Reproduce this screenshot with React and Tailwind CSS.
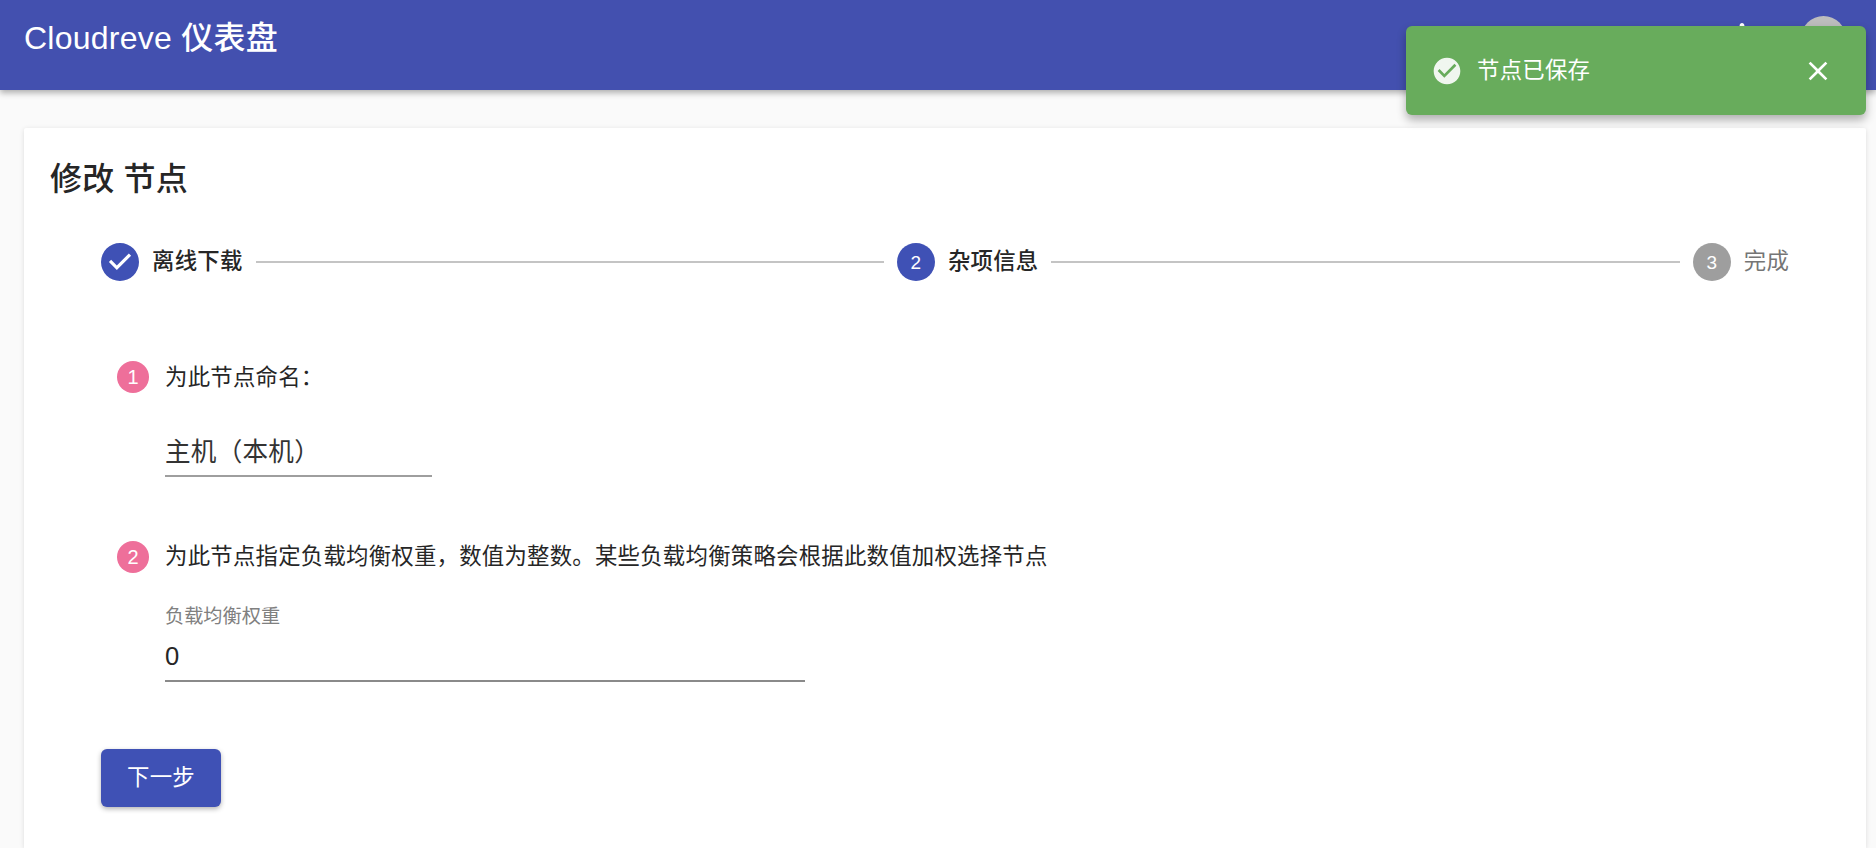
const FONT = "font-['Liberation_Sans','Noto_Sans_CJK_SC',sans-serif]";

function StepDone() {
  return (
    <svg viewBox="0 0 24 24" className="w-[38px] h-[38px] shrink-0 text-[#3f51b5]" fill="currentColor">
      <path d="M12 0a12 12 0 1 0 0 24 12 12 0 0 0 0-24zm-2 17l-5-5 1.4-1.4 3.6 3.6 7.6-7.6L19 8l-9 9z" />
    </svg>
  );
}

function StepNum({ n, color }) {
  return (
    <div className={`w-[38px] h-[38px] shrink-0 rounded-full flex items-center justify-center text-white text-[19px] leading-none ${color}`}>
      {n}
    </div>
  );
}

function Line() {
  return <div className="flex-1 h-[2px] bg-[#c4c4c4]" />;
}

function Bullet({ n }) {
  return (
    <div className="w-[32px] h-[32px] shrink-0 rounded-full bg-[#ee6f9a] flex items-center justify-center text-white text-[20px] leading-none">
      {n}
    </div>
  );
}

export default function App() {
  return (
    <div className={`relative h-screen overflow-hidden bg-[#fafafa] text-[#262626] flex flex-col ${FONT}`}>
      <header className="h-[90px] shrink-0 bg-[#4350af] text-white flex items-center justify-between pl-[24px] pr-[30px] pb-[14px] shadow-[0_3px_6px_rgba(0,0,0,0.3)] relative z-10">
        <div className="text-[32px] leading-[48px] tracking-[0.24px] font-medium">Cloudreve 仪表盘</div>
        <div className="flex items-center gap-[40px]">
          <svg viewBox="0 0 24 24" className="w-[38px] h-[38px] text-white" fill="currentColor">
            <path d="M12 22c1.1 0 2-.9 2-2h-4c0 1.1.89 2 2 2zm6-6v-5c0-3.07-1.64-5.64-4.5-6.32V4c0-.83-.67-1.5-1.5-1.5s-1.5.67-1.5 1.5v.68C7.63 5.36 6 7.92 6 11v5l-2 2v1h16v-1l-2-2z" />
          </svg>
          <div className="w-[45px] h-[45px] rounded-full bg-[#bdbdbd]" />
        </div>
      </header>

      <main className="flex-1 min-h-0 pt-[38px] pl-[24px] pr-[10px] flex flex-col">
        <div className="flex-1 bg-white rounded-t-[2px] shadow-[0_1px_5px_rgba(0,0,0,0.12)] pt-[26px] px-[26px]">
          <h1 className="text-[32px] leading-[51px] tracking-[0.24px] font-medium">修改 节点</h1>

          <div className="mt-[38px] ml-[51px] mr-[51px] flex items-center gap-[13px]">
            <StepDone />
            <span className="text-[22.4px] leading-[38px] tracking-[0.24px] font-medium">离线下载</span>
            <Line />
            <StepNum n="2" color="bg-[#3f51b5]" />
            <span className="text-[22.4px] leading-[38px] tracking-[0.24px] font-medium">杂项信息</span>
            <Line />
            <StepNum n="3" color="bg-[#9e9e9e]" />
            <span className="text-[22.4px] leading-[38px] tracking-[0.24px] text-[#757575]">完成</span>
          </div>

          <div className="mt-[80px] ml-[67px] flex items-center gap-[16px]">
            <Bullet n="1" />
            <span className="text-[22.4px] leading-[32px] tracking-[0.24px] relative top-[1px]">为此节点命名：</span>
          </div>
          <div className="mt-[40px] ml-[115px] w-[267px] h-[44px] border-b-2 border-[#9e9e9e] text-[25.6px] leading-[38px] tracking-[0.24px] text-[#333333]">
            主机（本机）
          </div>

          <div className="mt-[64px] ml-[67px] flex items-center gap-[16px]">
            <Bullet n="2" />
            <span className="text-[22.4px] leading-[32px] tracking-[0.24px]">为此节点指定负载均衡权重，数值为整数。某些负载均衡策略会根据此数值加权选择节点</span>
          </div>
          <div className="mt-[30px] ml-[115px] w-[640px]">
            <div className="text-[19.2px] leading-[28px] text-[#808080]">负载均衡权重</div>
            <div className="mt-[7px] h-[44px] border-b-2 border-[#8a8a8a] text-[25.6px] leading-[36px]">0</div>
          </div>

          <button className="mt-[67px] ml-[51px] w-[120px] h-[58px] rounded-[6px] bg-[#3f51b5] text-white text-[22.4px] tracking-[0.24px] shadow-[0_2px_5px_rgba(0,0,0,0.3)]">
            下一步
          </button>
        </div>
      </main>

      <div className="absolute z-20 top-[26px] right-[10px] w-[460px] h-[89px] rounded-[6px] bg-[#68ac5c] text-white flex items-center pl-[25px] pr-[32px] shadow-[0_5px_10px_rgba(0,0,0,0.3)]">
        <svg viewBox="0 0 24 24" className="w-[32px] h-[32px] opacity-90" fill="currentColor">
          <path d="M12 2C6.47 2 2 6.47 2 12s4.47 10 10 10 10-4.47 10-10S17.53 2 12 2zm-2 15l-5-5 1.41-1.41L10 14.17l7.59-7.59L19 8l-9 9z" />
        </svg>
        <span className="ml-[14px] flex-1 text-[22.4px] leading-[32px] tracking-[0.24px]">节点已保存</span>
        <svg viewBox="0 0 24 24" className="w-[32px] h-[32px]" fill="currentColor">
          <path d="M19 6.41L17.59 5 12 10.59 6.41 5 5 6.41 10.59 12 5 17.59 6.41 19 12 13.41 17.59 19 19 17.59 13.41 12z" />
        </svg>
      </div>
    </div>
  );
}
